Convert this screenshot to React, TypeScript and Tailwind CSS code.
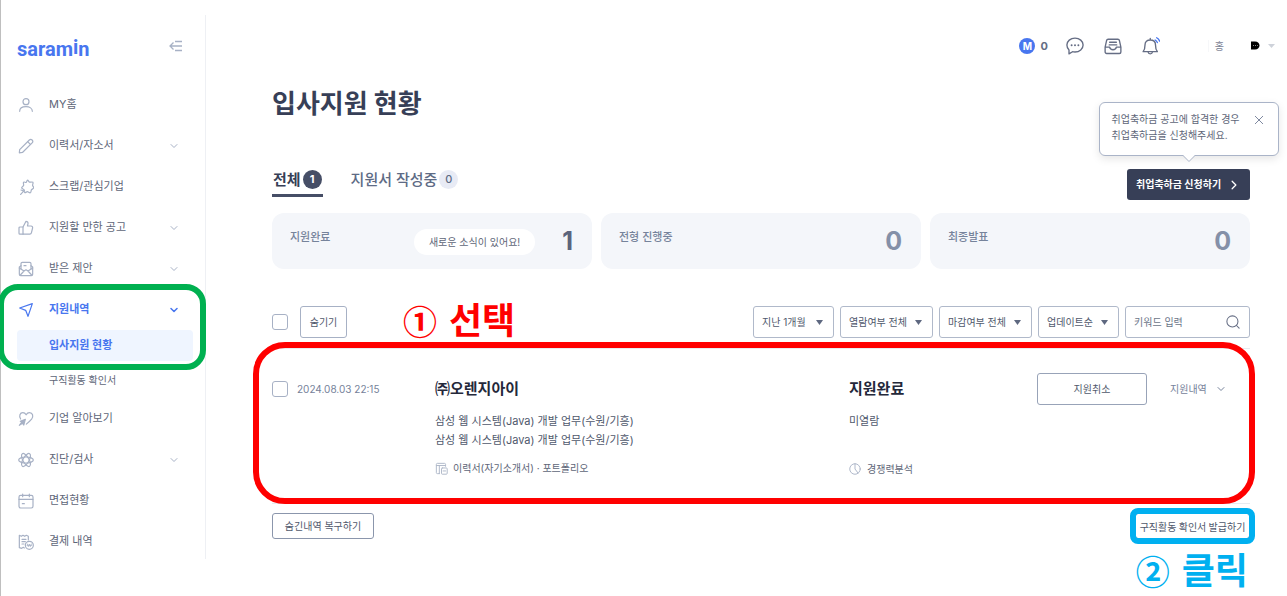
import { ReactNode } from "react";

function Icon(props: { children: ReactNode; className?: string }) {
  return (
    <svg
      xmlns="http://www.w3.org/2000/svg"
      className={props.className || "h-4 w-4"}
      fill="none"
      viewBox="0 0 24 24"
      stroke="currentColor"
      strokeWidth={1.8}
      strokeLinecap="round"
      strokeLinejoin="round"
      aria-hidden="true"
    >
      {props.children}
    </svg>
  );
}

function Chevron(props: { className?: string }) {
  return (
    <svg
      className={props.className || "h-2 w-2"}
      fill="none"
      viewBox="0 0 8 8"
      stroke="currentColor"
      strokeLinecap="round"
      strokeLinejoin="round"
      aria-hidden="true"
    >
      <path d="M1 2.5l3 3 3-3" />
    </svg>
  );
}

const icons = {
  user: (
    <>
      <circle cx="12" cy="7" r="4.5" />
      <path d="M2.5 21.5c0-4.5 4-7 9.500-7s9.500 2.500 9.500 7" />
    </>
  ),
  pencil: (
    <>
      <path d="M2.500 17.500L17 3a3 3 0 014.200 0 3 3 0 010 4.200L6.700 21.700 2 22.200z" />
      <path d="M14.500 5.500l4.200 4.200" />
    </>
  ),
  pin: (
    <>
      <path d="M14.200 1.800c1.300 0 1.700 2.400 2.900 2.900s4.200-.9 5.200.2-.8 3.600-.4 4.900 1.900 2.300 1.500 3.700-2.600 1.700-3.300 2.800-.1 3.700-1.600 4.300-3-1.600-4.400-1.600-2.800 2-4.100 1.200-.4-3.300-1.100-4.300-3.300-1.300-3.400-2.800 2.400-2.100 2.900-3.400-1-4.100 0-5 2.900.9 3.800.5 1-3.400 2-3.400z" />
      <path d="M9.500 17L4 23.200M4.500 16.500L8.500 18" />
    </>
  ),
  thumb: (
    <>
      <path d="M7.500 10.500L12 2c2 0 3.300 1.500 3 3.300L14.200 9h5.300c1.700 0 2.800 1.400 2.400 3l-1.800 7.300c-.3 1.200-1.200 1.900-2.400 1.900H7.500z" />
      <path d="M7.500 10.500H3A1.500 1.500 0 001.500 12v7.700A1.500 1.500 0 003 21.200h4.500" />
    </>
  ),
  mail: (
    <>
      <path d="M4.500 12V4a2 2 0 012-2h11a2 2 0 012 2v8" />
      <path d="M4.500 7L2 9v11a2 2 0 002 2h16a2 2 0 002-2V9l-2.500-2" />
      <path d="M2 10.500L9 15l3-1.800L15 15l7-4.500M9 15l-5.500 6M15 15l5.500 6M9 7h3" />
    </>
  ),
  plane: <path d="M2.500 9L21.500 2.500 15 21.500 11.500 12.500z" />,
  heart: (
    <>
      <path d="M4 12C1 7.500 3 2.500 7.200 2.500c2.200 0 3.900 1.300 5 3.200 1.100-1.900 2.800-3.200 5-3.200 4.700 0 6.600 5.300 3.200 9.800-1.900 2.400-4.800 4.900-7.900 7.400" />
      <path
        d="M11 12.500l-7.500 2.800 2.200 1.400L2 21.500l4.800-3.200 1.800 2.700z"
        fill="currentColor"
      />
    </>
  ),
  atom: (
    <>
      <ellipse cx="12" cy="12" rx="11" ry="4.500" />
      <ellipse cx="12" cy="12" rx="11" ry="4.500" transform="rotate(60 12 12)" />
      <ellipse cx="12" cy="12" rx="11" ry="4.500" transform="rotate(120 12 12)" />
    </>
  ),
  calendar: (
    <>
      <rect x="1.500" y="3.500" width="21" height="19" rx="2.500" />
      <path d="M1.500 9.500h21M7 1.500v4M17 1.500v4M6.500 16h3" />
    </>
  ),
  receipt: (
    <>
      <path d="M9.500 21l-1.500-1-2.500 1.500L2 20.500V2l3 1.500L7.500 2 10 3.500 12.500 2l3 1.500V9M6 8h6M6 11.500h5M6 15h3" />
      <circle cx="17" cy="17" r="6" />
      <path
        d="M14 15l1.500 4 1.500-4 1.500 4 1.500-4M13.500 17h7"
        strokeWidth={1.200}
      />
    </>
  ),
};

const menu: {
  label: string;
  icon: keyof typeof icons;
  expandable?: boolean;
}[] = [
  { label: "MY홈", icon: "user" },
  { label: "이력서/자소서", icon: "pencil", expandable: true },
  { label: "스크랩/관심기업", icon: "pin" },
  { label: "지원할 만한 공고", icon: "thumb", expandable: true },
  { label: "받은 제안", icon: "mail", expandable: true },
];

const menuAfter: typeof menu = [
  { label: "기업 알아보기", icon: "heart" },
  { label: "진단/검사", icon: "atom", expandable: true },
  { label: "면접현황", icon: "calendar" },
  { label: "결제 내역", icon: "receipt" },
];

function MenuItem(props: { item: (typeof menu)[number]; active?: boolean }) {
  const { item, active } = props;
  return (
    <a
      href="#"
      className={
        active
          ? "flex h-[41px] items-center pl-[17px] pr-[27px] font-bold text-[#4876ef]"
          : "flex h-[41px] items-center pl-[17px] pr-[27px] text-[#5e6678]"
      }
    >
      <span className={active ? "text-[#4876ef]" : "text-[#a7b1c5]"}>
        <Icon>{icons[item.icon]}</Icon>
      </span>
      <span className="ml-[15px] flex-1">{item.label}</span>
      {item.expandable && (
        <Chevron
          className={active ? "h-2 w-2 stroke-[1.5]" : "h-2 w-2 text-[#a7b1c5]"}
        />
      )}
    </a>
  );
}

function Sidebar() {
  return (
    <aside className="mt-[15px] h-[544px] w-[205px] shrink-0 border-r border-[#eef0f4] text-[11px]">
      <div className="flex h-[69px] items-start justify-between pl-4 pr-[23px] pt-5">
        <a
          href="#"
          className="font-['Roboto'] text-[20px] leading-6 font-bold text-[#4876ef]"
        >
          saram<span className="align-[2px]">i</span>n
        </a>
        <button aria-label="메뉴 접기" className="mt-[3px] text-[#a7b1c5]">
          <svg
            className="h-4 w-[13px]"
            viewBox="0 0 13 16"
            fill="none"
            stroke="currentColor"
            strokeWidth={1.300}
          >
            <path d="M6 3.500h7M1 8h12M6 12.500h7M4.500 4.500L1 8l3.500 3.500" />
          </svg>
        </button>
      </div>
      <nav>
        {menu.map((item) => (
          <MenuItem key={item.label} item={item} />
        ))}
        <div className="relative pb-px">
          <MenuItem
            item={{ label: "지원내역", icon: "plane", expandable: true }}
            active
          />
          <a
            href="#"
            className="mr-3 ml-4 flex h-[31px] items-center rounded bg-[#eff5ff] pl-8 text-[11px] font-bold text-[#4876ef]"
          >
            입사지원 현황
          </a>
          {/* green highlight */}
          <div className="pointer-events-none absolute -top-[5px] -right-px -bottom-2 -left-[3px] rounded-[20px] border-6 border-[#00b050]" />
        </div>
        <a
          href="#"
          className="flex h-9 items-center pl-12 text-[10px] text-[#5e6678]"
        >
          구직활동 확인서
        </a>
        {menuAfter.map((item) => (
          <MenuItem key={item.label} item={item} />
        ))}
      </nav>
    </aside>
  );
}

function Header() {
  return (
    <header className="flex h-8 items-center justify-end pr-3 text-[#656d84]">
      <span className="flex h-4 w-4 items-center justify-center rounded-full bg-[#4876ef] text-[10px] font-bold text-white">
        M
      </span>
      <span className="ml-[5px] text-[11px] font-bold">0</span>
      <button aria-label="메시지" className="ml-[18px]">
        <Icon className="h-[18px] w-[18px]">
          <path d="M12 1.500c6 0 10.800 4 10.800 9.200S18 20 12 20c-1.200 0-2.300-.1-3.300-.4L4 22.500v-5.200c-1.800-1.700-2.800-4-2.800-6.600C1.200 5.500 6 1.500 12 1.500z" />
          <path d="M7.500 11h.01M12 11h.01M16.500 11h.01" strokeWidth={2.600} />
        </Icon>
      </button>
      <button aria-label="보관함" className="ml-5">
        <Icon className="h-[18px] w-[18px]">
          <path d="M1.500 13.500L3.500 4.500c.2-1 1-1.500 2-1.500h13c1 0 1.800.5 2 1.500l2 9V20a2 2 0 01-2 2h-17a2 2 0 01-2-2zM1.500 13.500h6c.5 2.300 2.200 3.500 4.500 3.500s4-1.200 4.500-3.500h6M7.500 7h9M7 10.500h10" />
        </Icon>
      </button>
      <button aria-label="알림" className="ml-5">
        <Icon className="h-[18px] w-[18px]">
          <path d="M1.500 19.500h19c-2-2.300-2.500-4-2.500-9 0-4-2.800-6.500-7-6.500s-7 2.500-7 6.500c0 5-.5 6.700-2.500 9zM11 4V2M8 20c.3 1.600 1.400 2.500 3 2.500s2.700-.9 3-2.500" />
          <path
            d="M17.500 4c1.500.8 2.500 2 3 3.500M19.500 1c1.900.9 3.300 2.400 3.900 4.500"
            stroke="#4876ef"
          />
        </Icon>
      </button>
      <span className="ml-12 h-3 w-px bg-[#f6f7f9]" />
      <span className="ml-1.5 text-[10px] text-[#7b8294]">홍</span>
      <svg className="ml-[26px] h-2.5 w-2.5" viewBox="0 0 10 10">
        <path d="M1 .5h4C7.800.500 9.500 2.300 9.500 4.500S7.800 8.500 5 8.500H1z" fill="#000" />
        <path d="M3 4.500h1M5 4.500h1M7 4.500h.8" stroke="#888" />
      </svg>
      <svg className="ml-2 h-1.5 w-[7px]" viewBox="0 0 7 6">
        <path d="M0 1h7L3.500 5z" fill="#ced2da" />
      </svg>
    </header>
  );
}

function BenefitButton() {
  return (
    <div className="relative">
      <div className="absolute bottom-full left-1/2 mb-[13px] flex h-[54px] w-[180px] -translate-x-1/2 items-start justify-between rounded-md border border-[#aab4c8] bg-white pt-2 pr-3.5 pl-3 shadow-[0_3px_8px_rgba(0,0,0,0.1)]">
        <p className="text-[10px] leading-4 whitespace-nowrap text-[#5e6678]">
          취업축하금 공고에 합격한 경우
          <br />
          취업축하금을 신청해주세요.
        </p>
        <button aria-label="닫기" className="mt-1 text-[#7f89a0]">
          <svg className="h-2.5 w-2.5" viewBox="0 0 10 10" stroke="currentColor">
            <path d="M1 1l8 8M9 1L1 9" />
          </svg>
        </button>
        <svg
          className="absolute top-full left-1/2 -mt-px h-2 w-3 -translate-x-1/2"
          viewBox="0 0 12 8"
        >
          <path d="M0 0h12v1L6 7 0 1z" fill="#fff" />
          <path d="M0 1.500l6 6 6-6" fill="none" stroke="#aab4c8" />
        </svg>
      </div>
      <button className="flex h-[31px] w-[123px] items-center justify-between rounded-[3px] bg-[#373f57] pr-[11px] pl-[9px] text-[10px] font-bold whitespace-nowrap text-white">
        취업축하금 신청하기
        <Chevron className="h-2.5 w-2.5 -rotate-90" />
      </button>
    </div>
  );
}

function Tabs() {
  return (
    <div className="flex items-start text-[15px]">
      <button className="flex h-7 items-start gap-0.5 border-b-3 border-[#464e66] px-px font-bold text-[#373f57]">
        <span className="leading-[22px]">전체</span>
        <span className="mt-px flex h-[19px] w-[19px] items-center justify-center rounded-full bg-[#464e66] text-[11px] text-white">
          1
        </span>
      </button>
      <button className="ml-7 flex h-7 items-start gap-0.5 font-medium text-[#5e6b85]">
        <span className="leading-[22px]">지원서 작성중</span>
        <span className="mt-px flex h-[19px] w-[19px] items-center justify-center rounded-full bg-[#e8ebf5] text-[11px]">
          0
        </span>
      </button>
    </div>
  );
}

function StatCard(props: { label: string; count: number; notice?: string }) {
  return (
    <div className="flex h-14 flex-1 items-center rounded-xl bg-[#f4f6fa] pt-0.5 pr-[19px] pl-[18px]">
      <span className="mb-2.5 flex-1 text-[11px] font-medium text-[#76839b]">
        {props.label}
      </span>
      {props.notice && (
        <span className="mr-[27px] flex h-[26px] items-center rounded-full bg-white px-[15px] text-[10px] text-[#5e6678]">
          {props.notice}
        </span>
      )}
      <span
        className={
          props.count > 0
            ? "text-[25px] font-bold text-[#5b647c]"
            : "text-[25px] font-bold text-[#8490a8]"
        }
      >
        {props.count}
      </span>
    </div>
  );
}

function Filter(props: { label: string; value: string; wide?: boolean }) {
  return (
    <div className="relative">
      <select
        aria-label={props.label}
        className={
          props.wide
            ? "h-8 w-[93px] appearance-none rounded-[3px] border border-[#b0b9ca] bg-white pl-2 text-[#4f586c]"
            : "h-8 w-[81px] appearance-none rounded-[3px] border border-[#b0b9ca] bg-white pl-2 text-[#4f586c]"
        }
      >
        <option>{props.value}</option>
      </select>
      <svg
        className="pointer-events-none absolute top-3.5 right-[11px] h-[5px] w-[7px]"
        viewBox="0 0 7 5"
      >
        <path d="M0 0h7L3.500 5z" fill="#5e6880" />
      </svg>
    </div>
  );
}

function Checkbox(props: { label: string }) {
  return (
    <input
      type="checkbox"
      aria-label={props.label}
      className="h-4 w-4 shrink-0 appearance-none rounded-[3px] border border-[#a7b1c5] bg-white"
    />
  );
}

function Callout(props: { mark: string; text: string }) {
  return (
    <div className="flex h-8 items-center gap-3 font-['Noto_Sans_CJK_KR',sans-serif] leading-8 font-bold">
      <span className="pb-0.5 text-[34px]">{props.mark}</span>
      <span className="pb-2 text-[36px]">{props.text}</span>
    </div>
  );
}

function Toolbar() {
  return (
    <div className="mt-[37px] flex items-center gap-1.5 text-[10px]">
      <Checkbox label="전체 선택" />
      <button className="ml-1.5 h-8 w-[47px] rounded-[3px] border border-[#a7b1c5] text-[#4f586c]">
        숨기기
      </button>
      <div className="ml-[50px] text-[#ff0000]">
        <Callout mark="①" text="선택" />
      </div>
      <div className="flex-1" />
      <Filter label="기간" value="지난 1개월" />
      <Filter label="열람여부" value="열람여부 전체" wide />
      <Filter label="마감여부" value="마감여부 전체" wide />
      <Filter label="정렬" value="업데이트순" />
      <div className="flex h-8 w-[125px] items-center rounded-[3px] border border-[#b0b9ca] pr-[9px] pl-2">
        <input
          aria-label="키워드"
          placeholder="키워드 입력"
          className="w-full min-w-0 placeholder:text-[#6b7488]"
        />
        <button aria-label="검색" className="text-[#656d84]">
          <Icon className="h-3.5 w-3.5">
            <circle cx="11" cy="11" r="9.500" />
            <path d="M18 18l4.500 4.500" />
          </Icon>
        </button>
      </div>
    </div>
  );
}

function Application() {
  return (
    <div className="relative mt-2.5 grid h-[156px] grid-cols-[163px_1fr_188px_213px] border-y border-[#e8ebf0] pt-6 text-[11px] text-[#4f586c]">
      <div className="flex h-8 items-center gap-[9px]">
        <Checkbox label="㈜오렌지아이 선택" />
        <span className="text-[10px] text-[#76829a]">2024.08.03 22:15</span>
      </div>
      <div>
        <h2 className="text-[15px] leading-8 font-bold text-[#24283a]">
          ㈜오렌지아이
        </h2>
        <p className="mt-[7px] leading-[19px]">
          삼성 웹 시스템(Java) 개발 업무(수원/기흥)
          <br />
          삼성 웹 시스템(Java) 개발 업무(수원/기흥)
        </p>
        <div className="mt-2.5 flex items-center gap-[5px] text-[10px] leading-4 text-[#5e6678]">
          <Icon className="h-[13px] w-[13px] text-[#b0b9ca]">
            <path d="M8 21.500H4.500a2 2 0 01-2-2v-15a2 2 0 012-2h13a2 2 0 012 2V8M2.500 6.500h17M8 6.500v15" />
            <rect x="12" y="11" width="10.500" height="11.500" rx="1.500" />
            <path d="M15 16.500h4.500" />
          </Icon>
          <span>이력서(자기소개서) · 포트폴리오</span>
        </div>
      </div>
      <div>
        <h3 className="text-[15px] leading-8 font-bold text-[#24283a]">
          지원완료
        </h3>
        <p className="mt-[7px] leading-[19px]">미열람</p>
        <button className="mt-[30px] flex items-center gap-1.5 text-[10px] leading-4 text-[#5e6678]">
          <Icon className="h-3 w-3 text-[#a7b1c5]">
            <circle cx="12" cy="12" r="10.500" />
            <path d="M12 1.500V12l6 8" />
          </Icon>
          경쟁력분석
        </button>
      </div>
      <div className="flex items-start text-[10px]">
        <button className="h-8 w-[110px] rounded-[3px] border border-[#98a3b8]">
          지원취소
        </button>
        <button className="ml-[23px] flex h-8 items-center gap-2.5 text-[#76829a]">
          지원내역
          <Chevron />
        </button>
      </div>
      {/* red highlight */}
      <div className="pointer-events-none absolute -top-[7px] -right-[5px] -bottom-px -left-[19px] rounded-[32px] border-6 border-[#ff0000]" />
    </div>
  );
}

function Footer() {
  return (
    <>
      <div className="mt-[9px] flex justify-between text-[10px] text-[#4f586c]">
        <button className="h-[26px] w-[102px] rounded-[3px] border border-[#8b96ac]">
          숨긴내역 복구하기
        </button>
        <div className="relative">
          <button className="h-[26px] w-[115px] rounded-[3px] border border-[#8b96ac] font-['Noto_Sans_CJK_KR',sans-serif] whitespace-nowrap">
            구직활동 확인서 발급하기
          </button>
          {/* blue highlight */}
          <div className="pointer-events-none absolute -inset-[5px] rounded-lg border-6 border-[#00b0f0]" />
        </div>
      </div>
      <div className="mt-[17px] flex justify-end pr-0.5 text-[#00b0f0]">
        <Callout mark="②" text="클릭" />
      </div>
    </>
  );
}

export default function App() {
  return (
    <div className="flex min-h-screen border-l border-[#bfbfbf] bg-white font-['Inter','Noto_Sans_CJK_KR',sans-serif]">
      <Sidebar />
      <div className="min-w-0 flex-1 pt-[30px]">
        <Header />
        <main className="pr-[37px] pl-[66px]">
          <h1 className="mt-[22px] text-[26px] leading-10 font-bold text-[#373f57]">
            입사지원 현황
          </h1>
          <div className="mt-[45px] flex items-start justify-between">
            <Tabs />
            <BenefitButton />
          </div>
          <div className="mt-[13px] flex gap-[9px]">
            <StatCard label="지원완료" count={1} notice="새로운 소식이 있어요!" />
            <StatCard label="전형 진행중" count={0} />
            <StatCard label="최종발표" count={0} />
          </div>
          <Toolbar />
          <Application />
          <Footer />
        </main>
      </div>
    </div>
  );
}
